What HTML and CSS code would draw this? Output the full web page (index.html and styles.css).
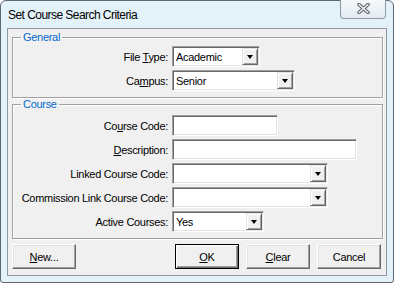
FILE: index.html
```html
<!DOCTYPE html>
<html lang="en">
<head>
    <meta charset="UTF-8">
    <meta name="viewport" content="width=device-width, initial-scale=1.0">
    <title>Set Course Search Criteria</title>
    <link rel="stylesheet" href="styles.css">
</head>
<body>
    <div class="window">
        <div class="titlebar">
            <span class="title">Set Course Search Criteria</span>
            <button class="close-btn" title="Close">
                <svg width="13" height="11" viewBox="0 0 13 11">
                    <path d="M2 1.5 L11 9.5 M11 1.5 L2 9.5" stroke="#5b5f63" stroke-width="3.6" stroke-linecap="round" fill="none"/>
                    <path d="M2 1.5 L11 9.5 M11 1.5 L2 9.5" stroke="#eef0f2" stroke-width="1.6" stroke-linecap="round" fill="none"/>
                </svg>
            </button>
        </div>

        <div class="client">
            <fieldset class="group group-general">
                <legend>General</legend>
                <div class="form-grid">
                    <label>File <u>T</u>ype:</label>
                    <div class="combo w-filetype">
                        <span class="value">Academic</span>
                        <span class="drop"><i class="arrow"></i></span>
                    </div>

                    <label>Ca<u>m</u>pus:</label>
                    <div class="combo w-campus">
                        <span class="value">Senior</span>
                        <span class="drop"><i class="arrow"></i></span>
                    </div>
                </div>
            </fieldset>

            <fieldset class="group group-course">
                <legend>Course</legend>
                <div class="form-grid">
                    <label>Co<u>u</u>rse Code:</label>
                    <div class="textbox w-code"></div>

                    <label><u>D</u>escription:</label>
                    <div class="textbox w-desc"></div>

                    <label>Linked Course Code:</label>
                    <div class="combo w-linked">
                        <span class="value"></span>
                        <span class="drop"><i class="arrow"></i></span>
                    </div>

                    <label>Commission Link Course Code:</label>
                    <div class="combo w-linked">
                        <span class="value"></span>
                        <span class="drop"><i class="arrow"></i></span>
                    </div>

                    <label>Active Courses:</label>
                    <div class="combo w-active">
                        <span class="value">Yes</span>
                        <span class="drop"><i class="arrow"></i></span>
                    </div>
                </div>
            </fieldset>

            <div class="button-row">
                <button class="btn"><u>N</u>ew...</button>
                <div class="button-group">
                    <button class="btn btn-default"><u>O</u>K</button>
                    <button class="btn"><u>C</u>lear</button>
                    <button class="btn">Cancel</button>
                </div>
            </div>
        </div>
    </div>
</body>
</html>
```

FILE: styles.css
```css
* {
    box-sizing: border-box;
    margin: 0;
    padding: 0;
}
body {
    font-family: "Liberation Sans", Arial, sans-serif;
    font-size: 11px;
    letter-spacing: -0.3px;
    color: #000;
    background: #ffffff;
}
.window {
    width: 394px;
    height: 283px;
    display: flex;
    flex-direction: column;
    background: #e3f1f9;
    border: 1px solid #5e6670;
    border-radius: 6px 6px 3px 3px;
    padding: 0 6px 6px 6px;
}
.titlebar {
    height: 27px;
    flex-shrink: 0;
    display: flex;
    justify-content: space-between;
    align-items: flex-start;
}
.title {
    font-size: 12px;
    letter-spacing: -0.55px;
    padding: 7px 0 0 1px;
    color: #000;
}
.close-btn {
    width: 46px;
    height: 19px;
    margin-top: -1px;
    margin-right: 1px;
    border: 1px solid #8c99a5;
    border-top: none;
    border-radius: 0 0 4px 4px;
    background: linear-gradient(#f4f8fb, #e3ebf1);
    display: flex;
    align-items: center;
    justify-content: center;
    padding-bottom: 1px;
}
.client {
    flex-grow: 1;
    min-height: 0;
    background: #f0f0f0;
    border: 1px solid #8d969e;
    padding: 2px 3px 0 4px;
    display: flex;
    flex-direction: column;
}
.group {
    border: 1px solid #a0a0a0;
    box-shadow: inset 1px 1px 0 #ffffff, 1px 1px 0 #ffffff;
    min-width: 0;
}
.group legend {
    color: #0066cc;
    margin-left: 8px;
    padding: 0 2px;
    line-height: 13px;
}
.group-general {
    padding-top: 2px;
    padding-bottom: 6px;
}
.group-course {
    padding-top: 4px;
    padding-bottom: 6px;
}
.form-grid {
    display: grid;
    grid-template-columns: 155px auto;
    column-gap: 4px;
    row-gap: 3px;
    align-items: center;
    justify-items: start;
}
.form-grid label {
    justify-self: end;
    white-space: nowrap;
}
.textbox, .combo {
    height: 21px;
    background: #ffffff;
    border: 1px solid;
    border-color: #a0a0a0 #ffffff #ffffff #a0a0a0;
    box-shadow: inset 1px 1px 0 #696969, inset -1px -1px 0 #e3e3e3;
}
.combo {
    display: flex;
    align-items: center;
    padding: 1px;
}
.combo .value {
    flex-grow: 1;
    padding-left: 2px;
}
.combo .drop {
    width: 16px;
    height: 17px;
    background: #f0f0f0;
    border: 1px solid;
    border-color: #e3e3e3 #696969 #696969 #e3e3e3;
    box-shadow: inset 1px 1px 0 #ffffff, inset -1px -1px 0 #a0a0a0;
    display: flex;
    align-items: center;
    justify-content: center;
}
.arrow {
    width: 0;
    height: 0;
    border-top: 4px solid #000;
    border-left: 3.5px solid transparent;
    border-right: 3.5px solid transparent;
    margin-top: 1px;
}
.w-filetype { width: 88px; }
.w-campus { width: 123px; }
.w-code { width: 106px; }
.w-desc { width: 185px; }
.w-linked { width: 156px; }
.w-active { width: 92px; }
.button-row {
    display: flex;
    justify-content: space-between;
    margin-top: 5px;
    padding-right: 2px;
}
.button-group {
    display: flex;
    gap: 7px;
}
.btn {
    width: 64px;
    height: 25px;
    font-family: "Liberation Sans", Arial, sans-serif;
    font-size: 11px;
    letter-spacing: -0.3px;
    color: #000;
    background: #f0f0f0;
    border: 1px solid;
    border-color: #ffffff #696969 #696969 #ffffff;
    box-shadow: inset -1px -1px 0 #a0a0a0, inset 1px 1px 0 #e3e3e3;
}
.btn-default {
    border: 1px solid #000;
    box-shadow: inset 1px 1px 0 #ffffff, inset -1px -1px 0 #696969, inset -2px -2px 0 #a0a0a0;
}
```
